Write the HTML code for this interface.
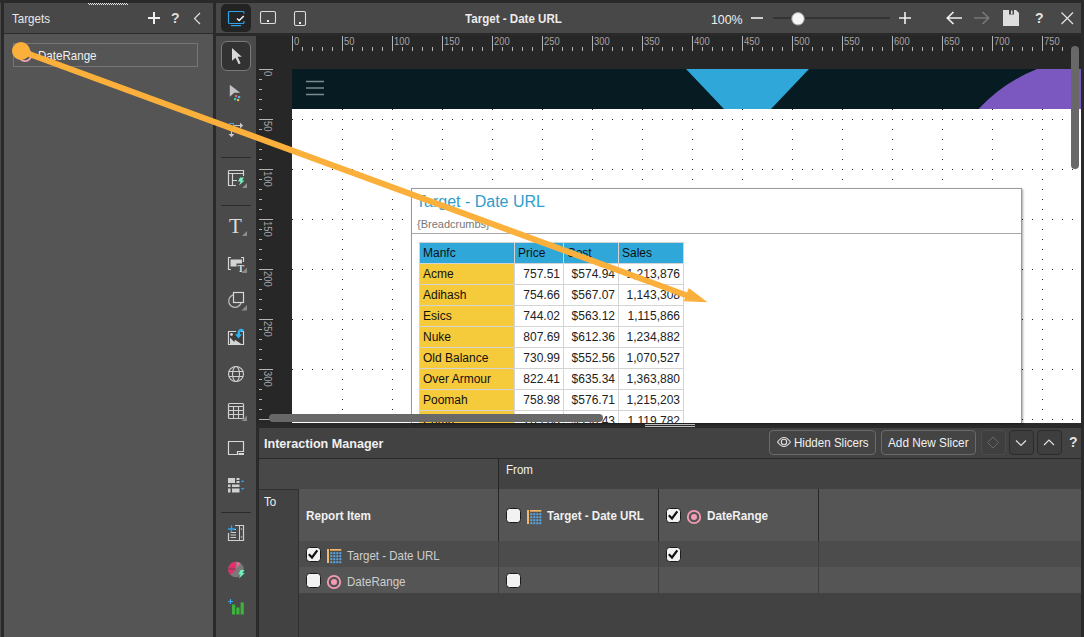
<!DOCTYPE html>
<html><head><meta charset="utf-8"><title>Target - Date URL</title>
<style>
*{box-sizing:border-box}
html,body{margin:0;padding:0}
body{width:1084px;height:637px;background:#2a2a2a;position:relative;overflow:hidden;font-family:"Liberation Sans",sans-serif;font-size:13px;color:#f0f0f0}
.a{position:absolute}
.t{position:absolute;white-space:nowrap;transform-origin:0 50%;transform:scaleX(.89);line-height:16px}
.b{font-weight:700}
svg{position:absolute;overflow:visible}
.cb{position:absolute;width:15px;height:15px;background:#f2f2f2;border:1.5px solid #1c1c1c;border-radius:3.5px}
.rl{position:absolute;font-size:10.5px;color:#a4a4a4;line-height:10px;white-space:nowrap;transform-origin:0 0;transform:scaleX(.9)}
.rv{position:absolute;font-size:10.5px;color:#a4a4a4;line-height:10px;white-space:nowrap;transform-origin:0 0;transform:rotate(90deg) scaleX(.9)}
.sep{position:absolute;left:221px;width:30px;height:1px;background:#2c2c2c}
#tbl{position:absolute;left:420px;top:242px;border-collapse:collapse;font-size:12px;color:#222;font-family:"Liberation Sans",sans-serif}
#tbl td{border:1px solid #d4d4d4;height:21px;padding:0 3px;line-height:14px;background:#fff;text-align:right;white-space:nowrap}
#tbl td.h{background:#2fa8d9;text-align:left;color:#111}
#tbl td.m{background:#f5ca3b;text-align:left;color:#111}
.btn{position:absolute;top:430px;height:25px;border:1px solid #6a6a6a;border-radius:4px;background:#444}
</style></head><body>
<div class="a" style="left:0;top:3px;width:1px;height:634px;background:#484848"></div>
<div class="a" style="left:4px;top:3px;width:209px;height:30px;background:#484848"></div>
<div class="a" style="left:4px;top:34px;width:209px;height:603px;background:#555"></div>
<div class="t" style="left:12px;top:11px;color:#e8e8e8">Targets</div>
<svg style="left:88px;top:3px" width="40" height="2" shape-rendering="crispEdges"><path d="M0 0.500H40" stroke="#e6e6e6" stroke-width="1" stroke-dasharray="1 1"/><path d="M1 1.500H40" stroke="#e6e6e6" stroke-width="1" stroke-dasharray="1 1"/></svg>
<svg style="left:146px;top:10px" width="60" height="16">
<path d="M2 8H14M8 2V14" stroke="#f0f0f0" stroke-width="2" fill="none"/>
<path d="M54 3L48.500 8.500L54 14" stroke="#ddd" stroke-width="1.200" fill="none"/>
</svg>
<div class="a b" style="left:171px;top:10px;font-size:14px;line-height:16px;color:#ddd">?</div>
<div class="a" style="left:13px;top:43px;width:185px;height:24px;border:1px solid #767676;background:#555"></div>
<svg style="left:17px;top:46.500px" width="16" height="16"><circle cx="8" cy="8" r="6.100" fill="none" stroke="#f4a3b8" stroke-width="1.900"/><circle cx="8" cy="8" r="3" fill="#f4a3b8"/></svg>
<div class="t" style="left:38px;top:48px;color:#f0f0f0">DateRange</div>
<div class="a" style="left:216px;top:3px;width:865px;height:30px;background:#484848"></div>
<div class="a" style="left:221px;top:4px;width:30px;height:28px;background:#232323;border-radius:5px"></div>
<svg style="left:226px;top:8px" width="90" height="22">
<path d="M18 5.5V4.5Q18 3.5 17 3.5H3.500Q2.5 3.500 2.5 4.500V14.500Q2.500 15.500 3.500 15.500H17Q18 15.500 18 14.500V13" fill="none" stroke="#2ea3e8" stroke-width="1.2"/>
<path d="M5 17.600H15" stroke="#2ea3e8" stroke-width="1.200"/>
<path d="M11 10.500L13.200 12.500L17.800 8" fill="none" stroke="#f4f4f4" stroke-width="1.500"/>
<rect x="34.500" y="3.500" width="15" height="12" rx="1.500" fill="none" stroke="#dcdcdc" stroke-width="1.100"/>
<rect x="41" y="12" width="2" height="2" fill="#f0f0f0"/>
<rect x="68.500" y="3.500" width="11" height="14" rx="1.500" fill="none" stroke="#dcdcdc" stroke-width="1.100"/>
<rect x="73" y="14" width="2" height="2" fill="#f0f0f0"/>
</svg>
<div class="t b" style="left:465px;top:11px;color:#ececec">Target - Date URL</div>
<div class="t" style="left:711px;top:12px;color:#f0f0f0;transform:scaleX(.95)">100%</div>
<svg style="left:748px;top:8px" width="330" height="20">
<path d="M3 10H15" stroke="#f0f0f0" stroke-width="1.600"/>
<path d="M25 10H142" stroke="#2e2e2e" stroke-width="1.500"/>
<circle cx="50" cy="10.800" r="6.200" fill="#f6f6f6" stroke="#aaa" stroke-width="1"/>
<path d="M151 10H163M157 4V16" stroke="#f0f0f0" stroke-width="1.600" fill="none"/>
<path d="M199 10H214M205.500 4L199.300 10L205.500 16" stroke="#f0f0f0" stroke-width="1.700" fill="none"/>
<path d="M226 10H241M234.500 4L240.700 10L234.500 16" stroke="#777" stroke-width="1.700" fill="none"/>
<path d="M255 2H268L271 5V18H255Z" fill="#dedede"/>
<rect x="261" y="2" width="5" height="4.500" fill="#484848"/><rect x="263" y="2.500" width="1.500" height="3.500" fill="#dedede"/>
<path d="M313.500 4.500L325 16M325 4.500L313.500 16" stroke="#e8e8e8" stroke-width="1.100" fill="none"/>
</svg>
<div class="a b" style="left:1035px;top:10px;font-size:14px;line-height:16px;color:#e4e4e4">?</div>
<div class="a" style="left:216px;top:36px;width:40px;height:601px;background:#4a4a4a"></div>
<div class="a" style="left:221px;top:41px;width:30px;height:30px;background:#323232;border:1px solid #7a7a7a;border-radius:6px"></div>
<div class="sep" style="top:157px"></div><div class="sep" style="top:205px"></div><div class="sep" style="top:512px"></div>
<svg id="tools" style="left:0;top:0" width="260" height="637">
<!-- 1 select arrow -->
<path d="M232 48L241.800 56.800H237.600L240.600 63.300L238.600 64.200L235.600 57.800L232 60.800Z" fill="#d8d8d8"/>
<!-- 2 arrow with dots -->
<path d="M229.800 84.800L240.200 92.800H234.200L229.800 96.800Z" fill="#c4c4c4"/>
<rect x="235" y="95" width="2.200" height="2.200" fill="#f0605a"/><rect x="238" y="96" width="2.200" height="2.200" fill="#4ab4f0"/><rect x="234" y="98" width="2.200" height="2.200" fill="#3ad0a0"/><rect x="237" y="99" width="2.200" height="2.200" fill="#f0b050"/>
<!-- 3 move -->
<rect x="229.500" y="123.500" width="4" height="4" fill="none" stroke="#3aa0e0" stroke-width="1"/>
<path d="M234 125.500H242M231.500 128V136" stroke="#c8c8c8" stroke-width="1.200" fill="none"/>
<path d="M240 122.500L243.200 125.500L240 128.500Z M228.500 134L231.500 137.200L234.500 134Z" fill="#c8c8c8"/>
<!-- 4 grid lightning -->
<path d="M228.500 170.500H243.500V176M243.500 173.500H228.500M228.500 170.500V185.500H236M232.500 173.500V185.500M232.500 180.500H237" fill="none" stroke="#d4d4d4" stroke-width="1.200"/>
<path d="M240 177.500H244L242 180.500H244.500L239 185.500L240.500 181.500H238Z" fill="#7af0c0"/>
<path d="M247 183V188H242Z" fill="#8e8e8e"/>
<!-- 5 T -->
<text x="229" y="233" font-family="Liberation Serif,serif" font-size="21" fill="#dcdcdc">T</text>
<path d="M247 231V236H242Z" fill="#8e8e8e"/>
<!-- 6 text box -->
<path d="M231 257.500H228.500V269.500H231M241 257.500H243.500V262" fill="none" stroke="#d4d4d4" stroke-width="1.200"/>
<path d="M230.500 259.500H242V263.500H236.500V266.500H230.500Z" fill="#d4d4d4"/>
<text x="237.500" y="271.500" font-family="Liberation Serif,serif" font-size="10" font-weight="700" fill="#dcdcdc">T</text>
<path d="M247 267.500V273H241.500Z" fill="#8a8a8a"/>
<!-- 7 shapes -->
<circle cx="235" cy="301" r="6.300" fill="none" stroke="#c0c0c0" stroke-width="1.200"/>
<rect x="233.500" y="292.500" width="10" height="10" fill="#4a4a4a" stroke="#d8d8d8" stroke-width="1.200"/>
<path d="M247 305V310.500H241.500Z" fill="#8a8a8a"/>
<!-- 8 image -->
<rect x="229" y="332" width="14.500" height="12.500" fill="#3c3c3c"/>
<path d="M236 331.500H228.500V344.500H243.500V331.500H241" fill="none" stroke="#d8d8d8" stroke-width="1.200"/>
<path d="M230 337.500L234.300 342L235 339.800L241.300 344H230Z" fill="#d4d4d4"/>
<circle cx="231.500" cy="334.500" r="1.400" fill="#d4d4d4"/>
<path d="M243.300 330.600Q238.600 328.400 238.600 335" fill="none" stroke="#2eb0f0" stroke-width="2.600"/>
<path d="M235 334.300H242L238.500 338.400Z" fill="#2eb0f0"/>
<!-- 9 globe -->
<circle cx="236" cy="374" r="7.500" fill="none" stroke="#d0d0d0" stroke-width="1.100"/>
<ellipse cx="236" cy="374" rx="3.500" ry="7.500" fill="none" stroke="#d0d0d0" stroke-width="1.100"/>
<path d="M229 371.500H243M229 376.500H243" stroke="#d0d0d0" stroke-width="1.100"/>
<!-- 10 table -->
<rect x="228.500" y="403.500" width="15" height="15" rx="1" fill="none" stroke="#d0d0d0" stroke-width="1.200"/>
<path d="M228.500 406.500H243.500M228.500 410.500H243.500M228.500 414.500H243.500M233.500 406.500V418.500M238.500 406.500V418.500" stroke="#d0d0d0" stroke-width="1.100" fill="none"/>
<path d="M247 415.500V421H241.500Z" fill="#8a8a8a"/>
<!-- 11 notch panel -->
<path d="M228.500 441.500H243.500V451.500H237.500V454.500H228.500Z" fill="none" stroke="#d8d8d8" stroke-width="1.200"/>
<rect x="238.500" y="453" width="5.500" height="2" fill="#d8d8d8"/>
<!-- 12 layout blocks -->
<path d="M228 478H235V483H228ZM236.500 478H239.500V480H236.500ZM236.500 481H239.500V483H236.500ZM228 484.500H230.500V487H228ZM232 484.500H239.500V487H232ZM228 488.500H230.500V492.500H228ZM232 488.500H239.500V492.500H232Z" fill="#d0d0d0"/>
<path d="M241 482L242.700 480L244.400 482ZM241 488L242.700 490L244.400 488Z" fill="#2ea3f0"/>
<!-- 14 doc plus -->
<path d="M235 525.500H243.500V540.500H228.500V533" fill="none" stroke="#d0d0d0" stroke-width="1.200"/>
<path d="M239.500 525.500V540.500" stroke="#d0d0d0" stroke-width="1"/>
<path d="M230.500 532.500H236M230.500 535H236M230.500 537.500H236M234 529.500H236" stroke="#d0d0d0" stroke-width="1"/>
<path d="M240.500 529.500L241.500 528L242.500 529.500ZM240.500 536.500L241.500 538L242.500 536.500Z" fill="#d0d0d0"/>
<path d="M228 529H235M231.500 525.500V532.500" stroke="#2ea3f0" stroke-width="1.300"/>
<!-- 15 pie -->
<circle cx="236" cy="569.500" r="7.800" fill="#7a7a7a"/>
<path d="M236 569.500L230.500 575A7.800 7.800 0 0 1 235.300 561.700V569.500Z" fill="#e0306a"/>
<path d="M236.700 561.700A7.800 7.800 0 0 1 240.500 563.200L236.700 568.500Z" fill="#f0609a"/>
<path d="M228.200 569H235.300" stroke="#4a4a4a" stroke-width="0.800"/>
<path d="M240.500 570H244.500L242.300 573H244.800L239 578.500L240.600 574.300H238.500Z" fill="#6ef0b8"/>
<!-- 16 bars -->
<rect x="232" y="604.500" width="3.200" height="10" fill="#3cb43c"/><rect x="236.300" y="607.500" width="3.200" height="7" fill="#3cb43c"/><rect x="240.600" y="602.500" width="3.200" height="12" fill="#3cb43c"/>
<path d="M228 601.500H233M230.500 599V604" stroke="#3aa8f0" stroke-width="1.100"/>
</svg>
<div class="a" style="left:256px;top:36px;width:825px;height:33px;background:#272727"></div>
<div class="a" style="left:256px;top:36px;width:36px;height:387px;background:#272727"></div>
<svg style="left:0;top:0" width="1084" height="430"><path d="M292.5 36V51M302.5 47V51M312.5 47V51M322.5 47V51M332.5 47V51M342.5 36V51M352.5 47V51M362.5 47V51M372.5 47V51M382.5 47V51M392.5 36V51M402.5 47V51M412.5 47V51M422.5 47V51M432.5 47V51M442.5 36V51M452.5 47V51M462.5 47V51M472.5 47V51M482.5 47V51M492.5 36V51M502.5 47V51M512.5 47V51M522.5 47V51M532.5 47V51M542.5 36V51M552.5 47V51M562.5 47V51M572.5 47V51M582.5 47V51M592.5 36V51M602.5 47V51M612.5 47V51M622.5 47V51M632.5 47V51M642.5 36V51M652.5 47V51M662.5 47V51M672.5 47V51M682.5 47V51M692.5 36V51M702.5 47V51M712.5 47V51M722.5 47V51M732.5 47V51M742.5 36V51M752.5 47V51M762.5 47V51M772.5 47V51M782.5 47V51M792.5 36V51M802.5 47V51M812.5 47V51M822.5 47V51M832.5 47V51M842.5 36V51M852.5 47V51M862.5 47V51M872.5 47V51M882.5 47V51M892.5 36V51M902.5 47V51M912.5 47V51M922.5 47V51M932.5 47V51M942.5 36V51M952.5 47V51M962.5 47V51M972.5 47V51M982.5 47V51M992.5 36V51M1002.5 47V51M1012.5 47V51M1022.5 47V51M1032.5 47V51M1042.5 36V51M1052.5 47V51M1062.5 47V51M259 69.5H273M259 79.5H262M259 89.5H262M259 99.5H262M259 109.5H262M259 119.5H273M259 129.5H262M259 139.5H262M259 149.5H262M259 159.5H262M259 169.5H273M259 179.5H262M259 189.5H262M259 199.5H262M259 209.5H262M259 219.5H273M259 229.5H262M259 239.5H262M259 249.5H262M259 259.5H262M259 269.5H273M259 279.5H262M259 289.5H262M259 299.5H262M259 309.5H262M259 319.5H273M259 329.5H262M259 339.5H262M259 349.5H262M259 359.5H262M259 369.5H273M259 379.5H262M259 389.5H262M259 399.5H262M259 409.5H262M259 419.5H273" stroke="#b4b4b4" stroke-width="1" fill="none"/></svg>
<div class="rl" style="left:294px;top:36px">0</div><div class="rl" style="left:344px;top:36px">50</div><div class="rl" style="left:394px;top:36px">100</div><div class="rl" style="left:444px;top:36px">150</div><div class="rl" style="left:494px;top:36px">200</div><div class="rl" style="left:544px;top:36px">250</div><div class="rl" style="left:594px;top:36px">300</div><div class="rl" style="left:644px;top:36px">350</div><div class="rl" style="left:694px;top:36px">400</div><div class="rl" style="left:744px;top:36px">450</div><div class="rl" style="left:794px;top:36px">500</div><div class="rl" style="left:844px;top:36px">550</div><div class="rl" style="left:894px;top:36px">600</div><div class="rl" style="left:944px;top:36px">650</div><div class="rl" style="left:994px;top:36px">700</div><div class="rl" style="left:1044px;top:36px">750</div><div class="rv" style="left:273px;top:71px">0</div><div class="rv" style="left:273px;top:121px">50</div><div class="rv" style="left:273px;top:171px">100</div><div class="rv" style="left:273px;top:221px">150</div><div class="rv" style="left:273px;top:271px">200</div><div class="rv" style="left:273px;top:321px">250</div><div class="rv" style="left:273px;top:371px">300</div>
<div class="a" id="cv" style="left:292px;top:69px;width:789px;height:354px;background:#fff;overflow:hidden">
<svg style="left:0;top:0" width="789" height="354">
<defs><pattern id="dh" x="0" y="0" width="10" height="50" patternUnits="userSpaceOnUse"><rect x="0" y="0" width="1" height="1" fill="#222"/></pattern>
<pattern id="dv" x="0" y="0" width="50" height="10" patternUnits="userSpaceOnUse"><rect x="0" y="0" width="1" height="1" fill="#222"/></pattern></defs>
<rect x="0" y="40" width="789" height="314" fill="url(#dh)"/><rect x="50" y="40" width="739" height="314" fill="url(#dv)"/>
<rect x="0" y="0" width="789" height="40" fill="#071c22"/>
<path d="M394 0H517L479 40H432Z" fill="#2fa8d9"/>
<path d="M686.500 40A162 162 0 0 1 745 0H789V40Z" fill="#7b57c0"/>
<path d="M14 12.500H32M14 19H32M14 25.500H32" stroke="#7b8b8f" stroke-width="1.600"/>
</svg>
</div>
<div class="a" style="left:411px;top:188px;width:611px;height:235px;background:#fff;border:1px solid #9a9a9a;border-bottom:none;box-shadow:1px 1px 2px rgba(0,0,0,.35);overflow:hidden"></div>
<div class="a" style="left:412px;top:233px;width:609px;height:1px;background:#a8a8a8"></div>
<div class="a" style="left:416px;top:192px;font-size:16px;line-height:20px;color:#2f9dcc;white-space:nowrap">Target - Date URL</div>
<div class="a" style="left:417px;top:217px;font-size:11px;line-height:14px;color:#777;white-space:nowrap">{Breadcrumbs}</div>
<div class="a" style="left:412px;top:236px;width:300px;height:187px;overflow:hidden"><table id="tbl" style="left:7px;top:6px">
<tr><td class="h" style="width:95px">Manfc</td><td class="h" style="width:49px">Price</td><td class="h" style="width:55px">Cost</td><td class="h" style="width:65px">Sales</td></tr>
<tr><td class="m">Acme</td><td>757.51</td><td>$574.94</td><td>1,213,876</td></tr>
<tr><td class="m">Adihash</td><td>754.66</td><td>$567.07</td><td>1,143,308</td></tr>
<tr><td class="m">Esics</td><td>744.02</td><td>$563.12</td><td>1,115,866</td></tr>
<tr><td class="m">Nuke</td><td>807.69</td><td>$612.36</td><td>1,234,882</td></tr>
<tr><td class="m">Old Balance</td><td>730.99</td><td>$552.56</td><td>1,070,527</td></tr>
<tr><td class="m">Over Armour</td><td>822.41</td><td>$635.34</td><td>1,363,880</td></tr>
<tr><td class="m">Poomah</td><td>758.98</td><td>$576.71</td><td>1,215,203</td></tr>
<tr><td class="m">Puma</td><td>769.08</td><td>$590.43</td><td>1,119,782</td></tr>
</table></div>
<div class="a" style="left:269px;top:413.500px;width:334px;height:8px;background:#686868;border-radius:4px"></div>
<div class="a" style="left:1071px;top:46px;width:8px;height:123px;background:#686868;border-radius:4px"></div>
<div class="a" style="left:645px;top:424px;width:50px;height:1px;background:#bdbdbd"></div>
<div class="a" style="left:645px;top:426px;width:50px;height:1px;background:#bdbdbd"></div>
<div class="a" style="left:259px;top:428px;width:822px;height:30px;background:#424242"></div>
<div class="a" style="left:259px;top:459px;width:239px;height:30px;background:#484848"></div>
<div class="a" style="left:499px;top:459px;width:582px;height:30px;background:#424242"></div>
<div class="a" style="left:259px;top:490px;width:39px;height:147px;background:#424242"></div>
<div class="a" style="left:299px;top:489px;width:782px;height:52px;background:#555"></div>
<div class="a" style="left:299px;top:541px;width:782px;height:26px;background:#4c4c4c"></div>
<div class="a" style="left:299px;top:567px;width:782px;height:26px;background:#555"></div>
<div class="a" style="left:299px;top:593px;width:782px;height:44px;background:#424242"></div>
<div class="a" style="left:498px;top:459px;width:1px;height:82px;background:#262626"></div>
<div class="a" style="left:658px;top:489px;width:1px;height:52px;background:#262626"></div>
<div class="a" style="left:818px;top:489px;width:1px;height:52px;background:#262626"></div>
<div class="a" style="left:498px;top:541px;width:1px;height:52px;background:#3e3e3e"></div>
<div class="a" style="left:658px;top:541px;width:1px;height:52px;background:#3e3e3e"></div>
<div class="a" style="left:818px;top:541px;width:1px;height:52px;background:#3e3e3e"></div>
<div class="a" style="left:298px;top:489px;width:1px;height:148px;background:#303030"></div>
<div class="a" style="left:259px;top:489px;width:40px;height:1px;background:#303030"></div>
<div class="t b" style="left:264px;top:436px;color:#f0f0f0;transform:scaleX(.967)">Interaction Manager</div>
<div class="t" style="left:506px;top:462px;color:#f0f0f0">From</div>
<div class="t" style="left:264px;top:494px;color:#f0f0f0">To</div>
<div class="t b" style="left:306px;top:508px;color:#f0f0f0;transform:scaleX(.9)">Report Item</div>
<div class="t b" style="left:547px;top:508px;color:#f0f0f0">Target - Date URL</div>
<div class="t b" style="left:707px;top:508px;color:#f0f0f0;transform:scaleX(.9)">DateRange</div>
<div class="t" style="left:347px;top:547.500px;color:#cecece;transform:scaleX(.885)">Target - Date URL</div>
<div class="t" style="left:347px;top:573.500px;color:#cecece">DateRange</div>
<div class="cb" style="left:306px;top:547px"><svg style="left:0;top:0" width="12" height="12"><path d="M1.800 6.300L5 9.500L10.300 2.300" fill="none" stroke="#111" stroke-width="2.200"/></svg></div><div class="cb" style="left:306px;top:573px"></div><div class="cb" style="left:506px;top:508px"></div><div class="cb" style="left:666px;top:508px"><svg style="left:0;top:0" width="12" height="12"><path d="M1.800 6.300L5 9.500L10.300 2.300" fill="none" stroke="#111" stroke-width="2.200"/></svg></div><div class="cb" style="left:666px;top:547px"><svg style="left:0;top:0" width="12" height="12"><path d="M1.800 6.300L5 9.500L10.300 2.300" fill="none" stroke="#111" stroke-width="2.200"/></svg></div><div class="cb" style="left:506px;top:573px"></div>
<svg style="left:327px;top:549px" width="15" height="15"><rect x="0" y="0" width="2" height="14" fill="#f0b868"/><rect x="3" y="0" width="11.300" height="1.700" fill="#f0b868"/><rect x="3.3" y="3.2" width="2" height="2" fill="#58a8e8"/><rect x="6.3" y="3.2" width="2" height="2" fill="#58a8e8"/><rect x="9.3" y="3.2" width="2" height="2" fill="#58a8e8"/><rect x="12.3" y="3.2" width="2" height="2" fill="#58a8e8"/><rect x="3.3" y="6.2" width="2" height="2" fill="#58a8e8"/><rect x="6.3" y="6.2" width="2" height="2" fill="#58a8e8"/><rect x="9.3" y="6.2" width="2" height="2" fill="#58a8e8"/><rect x="12.3" y="6.2" width="2" height="2" fill="#58a8e8"/><rect x="3.3" y="9.2" width="2" height="2" fill="#58a8e8"/><rect x="6.3" y="9.2" width="2" height="2" fill="#58a8e8"/><rect x="9.3" y="9.2" width="2" height="2" fill="#58a8e8"/><rect x="12.3" y="9.2" width="2" height="2" fill="#58a8e8"/><rect x="3.3" y="12.2" width="2" height="2" fill="#58a8e8"/><rect x="6.3" y="12.2" width="2" height="2" fill="#58a8e8"/><rect x="9.3" y="12.2" width="2" height="2" fill="#58a8e8"/><rect x="12.3" y="12.2" width="2" height="2" fill="#58a8e8"/></svg><svg style="left:527px;top:510px" width="15" height="15"><rect x="0" y="0" width="2" height="14" fill="#f0b868"/><rect x="3" y="0" width="11.300" height="1.700" fill="#f0b868"/><rect x="3.3" y="3.2" width="2" height="2" fill="#58a8e8"/><rect x="6.3" y="3.2" width="2" height="2" fill="#58a8e8"/><rect x="9.3" y="3.2" width="2" height="2" fill="#58a8e8"/><rect x="12.3" y="3.2" width="2" height="2" fill="#58a8e8"/><rect x="3.3" y="6.2" width="2" height="2" fill="#58a8e8"/><rect x="6.3" y="6.2" width="2" height="2" fill="#58a8e8"/><rect x="9.3" y="6.2" width="2" height="2" fill="#58a8e8"/><rect x="12.3" y="6.2" width="2" height="2" fill="#58a8e8"/><rect x="3.3" y="9.2" width="2" height="2" fill="#58a8e8"/><rect x="6.3" y="9.2" width="2" height="2" fill="#58a8e8"/><rect x="9.3" y="9.2" width="2" height="2" fill="#58a8e8"/><rect x="12.3" y="9.2" width="2" height="2" fill="#58a8e8"/><rect x="3.3" y="12.2" width="2" height="2" fill="#58a8e8"/><rect x="6.3" y="12.2" width="2" height="2" fill="#58a8e8"/><rect x="9.3" y="12.2" width="2" height="2" fill="#58a8e8"/><rect x="12.3" y="12.2" width="2" height="2" fill="#58a8e8"/></svg><svg style="left:326px;top:574px" width="16" height="16"><circle cx="8" cy="8" r="6.200" fill="none" stroke="#f59cb4" stroke-width="1.800"/><circle cx="8" cy="8" r="3" fill="#f59cb4"/></svg><svg style="left:686px;top:509px" width="16" height="16"><circle cx="8" cy="8" r="6.200" fill="none" stroke="#f59cb4" stroke-width="1.800"/><circle cx="8" cy="8" r="3" fill="#f59cb4"/></svg>
<div class="btn" style="left:769px;width:107px"></div>
<div class="btn" style="left:881px;width:95px"></div>
<div class="btn" style="left:981px;width:25px;border-color:#4c4c4c;background:#3f3f3f"></div>
<div class="btn" style="left:1009px;width:25px;border-color:#2c2c2c;background:#3e3e3e"></div>
<div class="btn" style="left:1037px;width:25px;border-color:#2c2c2c;background:#3e3e3e"></div>
<div class="t" style="left:794px;top:435px;color:#f0f0f0">Hidden Slicers</div>
<div class="t" style="left:888px;top:435px;color:#f0f0f0;transform:scaleX(.907)">Add New Slicer</div>
<svg style="left:776px;top:435px" width="300" height="16">
<path d="M1.500 7Q8 -2 14.500 7Q8 16 1.500 7Z" fill="none" stroke="#e0e0e0" stroke-width="1.100"/><circle cx="8" cy="7" r="2.700" fill="none" stroke="#e0e0e0" stroke-width="1.100"/>
<path d="M217 2L222.500 7.500L217 13L211.500 7.500Z" fill="none" stroke="#686868" stroke-width="1"/>
<path d="M240 5.500L245 10.500L250 5.500" fill="none" stroke="#e0e0e0" stroke-width="1.200"/>
<path d="M268 10L273 5L278 10" fill="none" stroke="#e0e0e0" stroke-width="1.200"/>
</svg>
<div class="a b" style="left:1069px;top:434px;font-size:14px;line-height:16px;color:#e4e4e4">?</div>
<svg style="left:0;top:0" width="1084" height="637"><circle cx="21" cy="51" r="9" fill="#fbb03b"/><path d="M21 51L687 295.500" stroke="#fbb03b" stroke-width="6" fill="none"/><path d="M688.800 288L707.500 302.200L683.700 301.300Z" fill="#fbb03b"/></svg>
</body></html>
